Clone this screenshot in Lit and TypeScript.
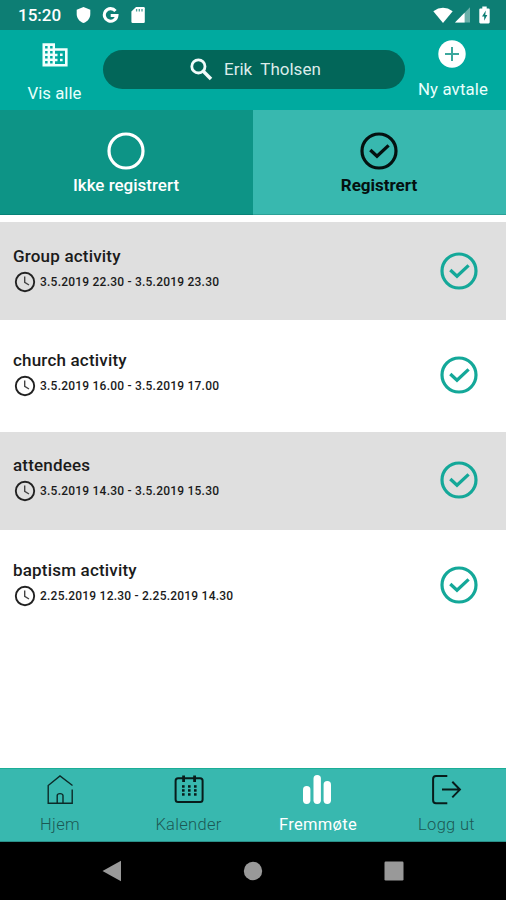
import { LitElement, html, svg, css } from "lit";
import { customElement, property } from "lit/decorators.js";
import { classMap } from "lit/directives/class-map.js";

const checkCircle = html`<svg width="38" height="38" viewBox="0 0 38 38" fill="none" stroke="currentColor">
  <circle cx="19" cy="19" r="17" stroke-width="3.2" />
  <path d="M10.3 18 17 24.3 28.6 13.4" stroke-width="3.3" />
</svg>`;

const emptyCircle = html`<svg width="38" height="38" viewBox="0 0 38 38" fill="none" stroke="currentColor">
  <circle cx="19" cy="19" r="17" stroke-width="3.2" />
</svg>`;

const clock = html`<svg width="22" height="22" viewBox="0 0 22 22" fill="none" stroke="#222">
  <circle cx="11" cy="11" r="9.2" stroke-width="1.9" />
  <path d="M10.7 5.6V11.4L15 14" stroke="#444" stroke-width="1.4" />
</svg>`;

const dots = [0, 1, 2].flatMap((r) => [0, 1, 2].map((c) => svg`<rect x=${8 + c * 6} y=${11.2 + r * 4} width="2.6" height="2.5" />`));

const navIcons: Record<string, unknown> = {
  home: html`<svg width="30" height="32" viewBox="0 0 30 32" fill="none" stroke="#0c2a28" stroke-width="1.4">
    <path d="M27.5 11.5 15 2 3.2 11.5V29.2H27.2V15.5" />
    <path d="M12.2 29V21.5Q12.2 19.6 15 19.6T18 21.5V29" />
  </svg>`,
  calendar: html`<svg width="30" height="32" viewBox="0 0 30 32" fill="#081c1b">
    <rect x="1.6" y="4.3" width="27" height="23.8" rx="2.5" fill="none" stroke="#081c1b" stroke-width="2" />
    <rect x="8.2" y="1.5" width="2.8" height="6.5" /><rect x="19.2" y="1.5" width="2.8" height="6.5" />
    ${dots}
  </svg>`,
  bars: html`<svg width="30" height="32" viewBox="0 0 30 32" fill="#fff">
    <rect x="0" y="12" width="7.4" height="18" rx="3.7" />
    <rect x="10.5" y="1" width="7.4" height="29" rx="3.7" />
    <rect x="20.6" y="7" width="7.4" height="23" rx="3.7" />
  </svg>`,
  logout: html`<svg width="30" height="32" viewBox="0 0 30 32" fill="none" stroke="#081c1b" stroke-width="2">
    <path d="M15.3 2H4Q1.1 2 1.1 5V26.2Q1.1 29.2 4 29.2H15.3" />
    <path d="M10 15.6H28.5M20.3 7.8 27.9 15.6 20.3 23.4" />
  </svg>`,
};

@customElement("status-bar")
class StatusBar extends LitElement {
  static styles = css`
    :host { display: flex; align-items: center; height: 30px; background: #0d7e74; color: #fff; }
    .time { width: 59px; padding-left: 18px; font: 500 17px/30px Roboto, sans-serif; height: 30px; }
    svg { display: block; flex: none; }
    .shield { margin-left: -1px; }
    .google { margin-left: 11px; }
    .card { margin-left: 12px; }
    .wifi { margin-left: auto; }
    .signal { margin-left: 2px; }
    .battery { margin: 0 16px 0 9px; }
  `;
  render() {
    return html`
      <div class="time">15:20</div>
      <svg class="shield" width="15" height="18" viewBox="0 0 15 18" fill="#fff"><path d="M7.5 1 14.3 3.8V8C14.3 12.3 11.6 15.6 7.5 17 3.4 15.6.7 12.3.7 8V3.8Z" /></svg>
      <svg class="google" width="17" height="18" viewBox="0 0 17 18" fill="none" stroke="#fff" stroke-width="3.1"><path d="M13.5 4.9A6.3 6.3 0 1 0 14.9 9.5H8.7" /></svg>
      <svg class="card" width="14" height="18" viewBox="0 0 14 18"><path d="M5 1H12.6Q13.8 1 13.8 2.2V15.8Q13.8 17 12.6 17H1.6Q.4 17 .4 15.8V5.6Z" fill="#fff" /><path d="M5.6 3V5.6M8.3 3V5.6M11 3V5.6" stroke="#4b9f97" stroke-width="1.3" /></svg>
      <svg class="wifi" width="20" height="17" viewBox="0 0 20 17" fill="#fff"><path d="M.3 4.3Q10-2.6 19.7 4.3L10 16Z" /></svg>
      <svg class="signal" width="15" height="16" viewBox="0 0 15 16"><path d="M15 .2V15.6H0Z" fill="#69b0a9" /><path d="M9.6 5.8V15.6H0Z" fill="#fff" /></svg>
      <svg class="battery" width="11" height="18" viewBox="0 0 11 18"><path d="M3.3.6H7.7V2.4H9.6Q10.7 2.4 10.7 3.5V16.3Q10.7 17.4 9.6 17.4H1.4Q.3 17.4.3 16.3V3.5Q.3 2.4 1.4 2.4H3.3Z" fill="#fff" /><path d="M6.8 4.6 3 10.6H5.2V14.8L8.3 8.9H6.3Z" fill="#0d7e74" /></svg>
    `;
  }
}

@customElement("activity-row")
class ActivityRow extends LitElement {
  @property() name = "";
  @property() period = "";
  static styles = css`
    :host { display: flex; align-items: center; height: 98px; padding: 0 28px 0 13px; box-sizing: border-box; color: #1b1b1b; }
    .info { flex: 1; padding-bottom: 5px; }
    .name { font: 500 17px/22px Roboto, sans-serif; letter-spacing: 0.19px; white-space: nowrap; }
    .when { display: flex; align-items: center; gap: 4px; margin-top: 4px; padding-left: 1px; font: 500 12px/22px Roboto, sans-serif; letter-spacing: 0.22px; white-space: nowrap; }
    .mark { color: #14a899; height: 38px; padding-bottom: 1px; }
    svg { display: block; flex: none; }
  `;
  render() {
    return html`
      <div class="info">
        <div class="name">${this.name}</div>
        <div class="when">${clock}<span>${this.period}</span></div>
      </div>
      <div class="mark">${checkCircle}</div>
    `;
  }
}

const activities = [
  { name: "Group activity", period: "3.5.2019 22.30 - 3.5.2019 23.30" },
  { name: "church activity", period: "3.5.2019 16.00 - 3.5.2019 17.00" },
  { name: "attendees", period: "3.5.2019 14.30 - 3.5.2019 15.30" },
  { name: "baptism activity", period: "2.25.2019 12.30 - 2.25.2019 14.30" },
];

const navItems = [
  { key: "home", label: "Hjem" },
  { key: "calendar", label: "Kalender" },
  { key: "bars", label: "Fremmøte", active: true },
  { key: "logout", label: "Logg ut" },
];

@customElement("app-root")
class AppRoot extends LitElement {
  static styles = css`
    :host { display: flex; flex-direction: column; height: 900px; background: #fff; font-family: Roboto, sans-serif; overflow: hidden; }
    svg { display: block; flex: none; }
    .header { display: grid; grid-template-columns: 103px 302px 101px; height: 80px; background: #00aa9f; color: #e9fffc; }
    .action { display: flex; flex-direction: column; align-items: center; font-size: 16.8px; line-height: 20px; white-space: nowrap; }
    .all { padding: 13px 0 0 6px; gap: 16px; }
    .new { padding: 10px 5px 0 0; gap: 11px; }
    .new span { letter-spacing: 0.15px; }
    .new svg { margin-right: 2px; }
    .search { display: flex; align-items: center; height: 39.5px; margin-top: 19.5px; border-radius: 20px; background: #026659; padding-left: 87px; gap: 11px; box-sizing: border-box; color: #dcecea; font-size: 17px; white-space: pre; }
    .tabs { display: grid; grid-template-columns: 253px 253px; height: 105px; }
    .tab { display: flex; flex-direction: column; align-items: center; padding: 22px 1px 0 0; box-sizing: border-box; gap: 4px; font: 500 17px/22px Roboto, sans-serif; background: #0d9486; color: #fff; border-bottom: 1px solid #078277; }
    .tab.selected { background: #38b8af; color: #041110; font-weight: 700; border-color: #2ba197; }
    .list { display: flex; flex-direction: column; gap: 6.8px; padding-top: 7px; flex: 1; }
    .shaded { background: #dfdfdf; }
    .bottom { display: grid; grid-template-columns: 120px 137px 122px 135px; height: 74px; border-top: 1px solid #1bae96; border-bottom: 1px solid #2b8f88; background: #38b8af; box-sizing: border-box; }
    .item { display: flex; flex-direction: column; align-items: center; padding-top: 5px; gap: 8px; color: #1c5854; font: 300 16.5px/22px Roboto, sans-serif; letter-spacing: 0.3px; }
    .item.active { color: #fff; font-weight: 400; }
    .system { display: grid; grid-template-columns: 1fr 1fr 1fr; height: 58px; background: #000; padding: 0 42px 0 42px; align-items: center; justify-items: center; }
  `;
  render() {
    return html`
      <status-bar></status-bar>
      <div class="header">
        <div class="action all">
          <svg width="26" height="24" viewBox="0 0 26 24"><path d="M.5.3H13V5.2H25.6V23.5H.5Z" fill="#f2fffd" /><path d="M3.1 3h2.5v2.4H3.1zM8.1 3h2.5v2.4H8.1zM3.1 8h2.5v2.4H3.1zM8.1 8h2.5v2.4H8.1zM3.1 13h2.5v2.4H3.1zM8.1 13h2.5v2.4H8.1zM3.1 18h2.5v2.4H3.1zM8.1 18h2.5v2.4H8.1zM13 7.8h10v13.1H13v-2.6h2.5v-2.5H13v-2.6h2.5v-2.5H13z" fill="#00aa9f" /><path d="M18 10.6h2.6v2.5H18zM18 15.7h2.6v2.5H18z" fill="#f2fffd" /></svg>
          <span>Vis alle</span>
        </div>
        <div class="search">
          <svg width="23" height="23" viewBox="0 0 23 23" fill="none" stroke="#f1fbfa"><circle cx="8.4" cy="8.4" r="6.6" stroke-width="2.8" /><path d="M13.3 13.3 21 21" stroke-width="3.5" /></svg>
          <span>Erik  Tholsen</span>
        </div>
        <div class="action new">
          <svg width="28" height="28" viewBox="0 0 28 28"><circle cx="14" cy="14" r="13.7" fill="#fff" /><path d="M14 7V21M7 14H21" stroke="#3ca79d" stroke-width="2" /></svg>
          <span>Ny avtale</span>
        </div>
      </div>
      <div class="tabs">
        <div class="tab">${emptyCircle}<span>Ikke registrert</span></div>
        <div class="tab selected">${checkCircle}<span>Registrert</span></div>
      </div>
      <div class="list">
        ${activities.map((a, i) => html`<activity-row class=${classMap({ shaded: i % 2 === 0 })} .name=${a.name} .period=${a.period}></activity-row>`)}
      </div>
      <div class="bottom">
        ${navItems.map((n) => html`<div class=${classMap({ item: true, active: !!n.active })}>${navIcons[n.key]}<span>${n.label}</span></div>`)}
      </div>
      <div class="system">
        <svg width="20" height="22" viewBox="0 0 20 22" fill="#999"><path d="M.5 11 19 .8V21.2Z" /></svg>
        <svg width="20" height="20" viewBox="0 0 20 20" fill="#999"><circle cx="10" cy="10" r="9.2" /></svg>
        <svg width="20" height="20" viewBox="0 0 20 20" fill="#999"><rect x=".5" y=".5" width="19" height="19" rx="1.2" /></svg>
      </div>
    `;
  }
}
